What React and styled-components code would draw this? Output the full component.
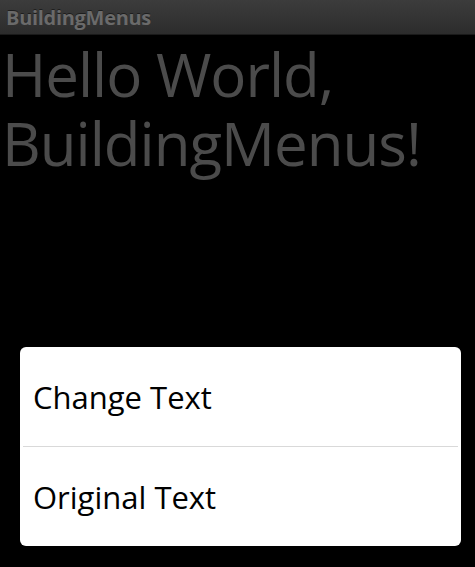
import styled, { createGlobalStyle } from 'styled-components';

const GlobalStyle = createGlobalStyle`
    html, body {
        margin: 0;
        padding: 0;
        background: #000;
        font-family: "Open Sans", "DejaVu Sans", sans-serif;
    }
`;

const Screen = styled.div`
    width: 475px;
    height: 567px;
    background: #000;
    display: flex;
    flex-direction: column;
    overflow: hidden;
`;

const TitleBar = styled.div`
    height: 35px;
    background: linear-gradient(#3c3c3c, #2c2c2c);
    border-bottom: 1px solid #1a1a1a;
    display: flex;
    align-items: center;
    padding-left: 6px;
    box-sizing: border-box;

    h1 {
        margin: 0;
        font-size: 20px;
        font-weight: bold;
        color: #6a6a6a;
        letter-spacing: -0.3px;
        text-shadow: 0 -1px 0 #1e1e1e;
    }
`;

const Greeting = styled.p`
    margin: 0;
    padding: 5px 0 0 2px;
    font-size: 60px;
    line-height: 69px;
    letter-spacing: -1px;
    color: #4b4b4b;
`;

const Content = styled.div`
    flex: 1;
    display: flex;
    flex-direction: column;
    justify-content: space-between;
    padding-bottom: 21px;
`;

const Menu = styled.ul`
    list-style: none;
    margin: 0 14px 0 20px;
    padding: 0;
    background: #fff;
    border-radius: 6px;
    overflow: hidden;
`;

const MenuItem = styled.li`
    height: 99px;
    display: flex;
    align-items: center;
    padding-left: 13px;
    font-size: 31px;
    color: #000;

    & + & {
        border-top: 1px solid #d9d9d9;
        margin: 0 3px;
        padding-left: 10px;
    }
`;

const items = ['Change Text', 'Original Text'];

const App = () => {
    return (
        <>
            <GlobalStyle />
            <Screen>
                <TitleBar>
                    <h1>BuildingMenus</h1>
                </TitleBar>
                <Content>
                    <Greeting>Hello World, BuildingMenus!</Greeting>
                    <Menu>
                        {items.map((item) => (
                            <MenuItem key={item}>{item}</MenuItem>
                        ))}
                    </Menu>
                </Content>
            </Screen>
        </>
    );
};

export default App;
